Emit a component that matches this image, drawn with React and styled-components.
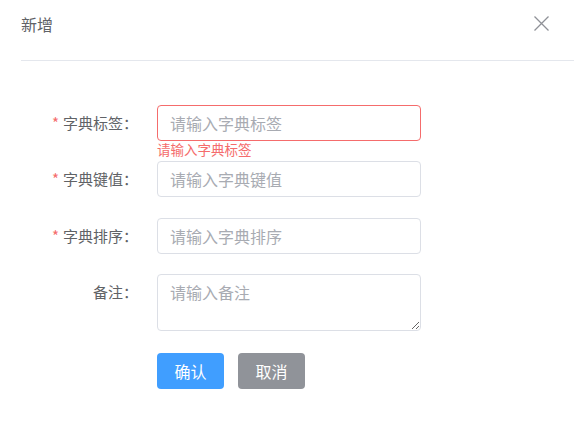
import styled, { createGlobalStyle } from "styled-components";

const fields = [
  { label: "字典标签", placeholder: "请输入字典标签", required: true, error: "请输入字典标签" },
  { label: "字典键值", placeholder: "请输入字典键值", required: true },
  { label: "字典排序", placeholder: "请输入字典排序", required: true },
];

export default function App() {
  return (
    <>
      <GlobalStyle />
      <Dialog>
        <Header>
          <Title>新增</Title>
          <CloseButton aria-label="关闭">
            <svg width="17" height="17" viewBox="0 0 17 17">
              <path d="M1.5 1.5L15.5 15.5M15.5 1.5L1.5 15.5" stroke="#8f9197" strokeWidth="1.3" fill="none" />
            </svg>
          </CloseButton>
        </Header>
        <Form>
          {fields.map((f) => (
            <FormItem key={f.label}>
              <Label>
                {f.required && <Star>*</Star>}
                {f.label}：
              </Label>
              <Control>
                <Input placeholder={f.placeholder} $error={!!f.error} />
                {f.error && <ErrorTip>{f.error}</ErrorTip>}
              </Control>
            </FormItem>
          ))}
          <FormItem>
            <Label>备注：</Label>
            <Control>
              <TextArea placeholder="请输入备注" />
            </Control>
          </FormItem>
          <FormItem>
            <Label />
            <Actions>
              <Button $kind="primary">确认</Button>
              <Button $kind="info">取消</Button>
            </Actions>
          </FormItem>
        </Form>
      </Dialog>
    </>
  );
}

const GlobalStyle = createGlobalStyle`
  html, body {
    margin: 0;
    background: #ffffff;
    font-family: "Noto Sans CJK SC", "Liberation Sans", sans-serif;
  }
  * { box-sizing: border-box; }
`;

const Dialog = styled.div`
  width: 574px;
  height: 446px;
  background: #fff;
`;

const Header = styled.div`
  display: flex;
  align-items: center;
  justify-content: space-between;
  height: 61px;
  margin-left: 21px;
  padding-right: 24px;
  border-bottom: 1px solid #e4e7ed;
`;

const Title = styled.span`
  font-size: 16px;
  color: #606266;
  line-height: 24px;
  margin-top: -12px;
`;

const CloseButton = styled.button`
  display: flex;
  border: none;
  background: none;
  padding: 0;
  margin-top: -14px;
  cursor: pointer;
`;

const Form = styled.form`
  display: flex;
  flex-direction: column;
  gap: 20.3px;
  padding-top: 44px;
`;

const FormItem = styled.div`
  display: flex;
  align-items: flex-start;
`;

const Label = styled.label`
  width: 157px;
  flex: none;
  padding-right: 19px;
  text-align: right;
  font-size: 15px;
  line-height: 36px;
  color: #606266;
`;

const Star = styled.span`
  color: #f56c6c;
  margin-right: 4px;
`;

const Control = styled.div`
  position: relative;
  width: 264px;
`;

const Input = styled.input`
  display: block;
  width: 100%;
  height: 36px;
  padding: 0 12px;
  border: 1px solid ${(p) => (p.$error ? "#f56c6c" : "#dcdfe6")};
  border-radius: 4px;
  font-family: inherit;
  font-size: 16px;
  color: #606266;
  outline: none;
  &::placeholder {
    color: #a8abb2;
  }
`;

const ErrorTip = styled.div`
  position: absolute;
  left: 0;
  top: 100%;
  margin-top: -1px;
  font-size: 13.5px;
  line-height: 18px;
  color: #f56c6c;
`;

const TextArea = styled.textarea`
  display: block;
  width: 100%;
  height: 57px;
  padding: 5px 12px;
  border: 1px solid #dcdfe6;
  border-radius: 4px;
  font-family: inherit;
  font-size: 16px;
  line-height: 24px;
  color: #606266;
  resize: vertical;
  outline: none;
  &::placeholder {
    color: #a8abb2;
  }
`;

const Actions = styled.div`
  display: flex;
  gap: 14px;
  padding-top: 1.5px;
`;

const Button = styled.button`
  height: 36px;
  padding: 0 17.5px;
  border: none;
  border-radius: 4px;
  font-family: inherit;
  font-size: 16px;
  color: #fff;
  background: ${(p) => (p.$kind === "primary" ? "#409eff" : "#909399")};
  cursor: pointer;
`;
